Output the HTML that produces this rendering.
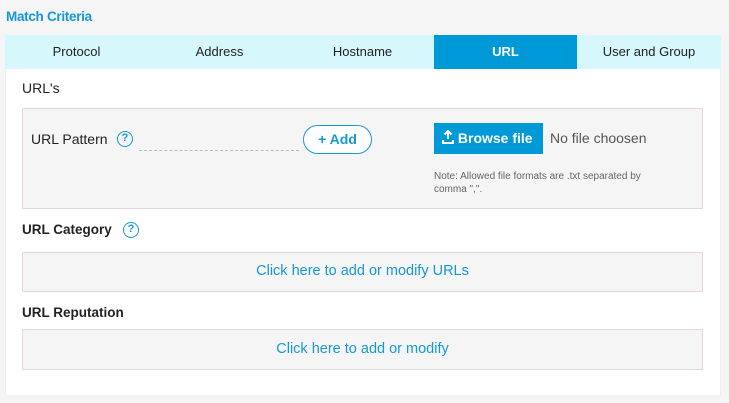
<!DOCTYPE html>
<html><head><style>
*{box-sizing:border-box;margin:0;padding:0}
body{width:729px;height:403px;background:#f5f5f5;font-family:"Liberation Sans",sans-serif;color:#222;position:relative;overflow:hidden}
.a{position:absolute}
.title{left:6px;top:9px;font-size:13.5px;font-weight:bold;color:#1598d6;letter-spacing:-0.3px}
.panel{left:5px;top:35px;width:716px;height:360px;background:#fff;border:1px solid #eee;border-bottom:none}
.tabs{left:5px;top:35px;width:716px;height:34px;background:#d6f7fc}
.tab{position:absolute;top:0;height:34px;line-height:34px;text-align:center;font-size:13px;color:#222}
.box{left:22px;width:681px;background:#f5f5f5;border:1px solid #e6d6da}
.h{font-size:13.5px;font-weight:bold;color:#222}
.q{display:inline-block;width:16px;height:16px;border:1.5px solid #1598d6;border-radius:50%;color:#1598d6;font-size:11px;font-weight:bold;text-align:center;line-height:13px}
.link{font-size:14.5px;color:#1598d6;text-align:center;width:681px}
</style></head><body>
<div class="a title">Match Criteria</div>
<div class="a panel"></div>
<div class="a tabs">
<div class="tab" style="left:0;width:143px">Protocol</div>
<div class="tab" style="left:143px;width:143px">Address</div>
<div class="tab" style="left:286px;width:143px">Hostname</div>
<div class="tab" style="left:429px;width:143px;background:#0099d8;color:#fff;font-weight:bold">URL</div>
<div class="tab" style="left:572px;width:144px">User and Group</div>
</div>
<div class="a h" style="left:22px;top:80px;font-weight:normal;font-size:14px">URL's</div>
<div class="a box" style="top:108px;height:101px"></div>
<div class="a" style="left:31px;top:131px;font-size:14px">URL Pattern</div>
<div class="a q" style="left:117px;top:131px">?</div>
<div class="a" style="left:139px;top:150px;width:160px;border-top:1px dashed #bbb"></div>
<div class="a" style="left:303px;top:125px;width:69px;height:29px;border:1.5px solid #1598d6;border-radius:15px;background:#fff;color:#1598d6;font-weight:bold;font-size:14px;text-align:center;line-height:26px">+ Add</div>
<div class="a" style="left:434px;top:123px;width:109px;height:31px;background:#0099d8;color:#fff;font-weight:bold;font-size:14px;line-height:31px;padding-left:8px">
<svg width="12" height="14" viewBox="0 0 12 14" style="vertical-align:-1px"><path d="M6 1v8M2.5 4.5L6 1l3.5 3.5M1 10v3h10v-3" stroke="#fff" stroke-width="2" fill="none"/></svg> Browse file</div>
<div class="a" style="left:550px;top:130px;font-size:14px;color:#555">No file choosen</div>
<div class="a" style="left:434px;top:170px;font-size:10px;color:#666;line-height:13px;width:236px">Note: Allowed file formats are .txt separated by comma ",".</div>
<div class="a h" style="left:22px;top:222px">URL Category</div>
<div class="a q" style="left:123px;top:222px">?</div>
<div class="a box" style="top:252px;height:40px"></div>
<div class="a link" style="left:22px;top:263px">Click here to add or modify URLs</div>
<div class="a h" style="left:22px;top:305px">URL Reputation</div>
<div class="a box" style="top:329px;height:41px"></div>
<div class="a link" style="left:22px;top:341px">Click here to add or modify</div>
</body></html>
